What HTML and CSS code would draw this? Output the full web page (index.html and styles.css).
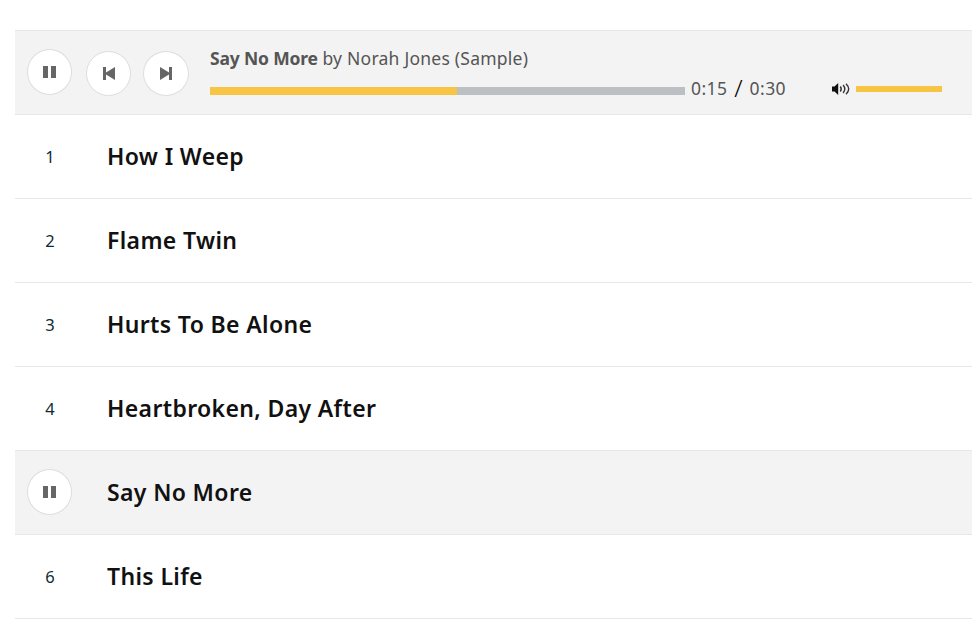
FILE: index.html
```
<!DOCTYPE html>
<html lang="en">
<head>
    <meta charset="UTF-8">
    <meta name="viewport" content="width=device-width, initial-scale=1.0">
    <title>Say No More by Norah Jones</title>
    <link rel="stylesheet" href="styles.css">
</head>
<body>
    <div class="container">
        <div class="player">
            <div class="controls">
                <button class="btn btn-pause" aria-label="Pause">
                    <svg width="13" height="12" viewBox="0 0 13 12"><path d="M0 0h5v12H0zM8 0h5v12H8z"/></svg>
                </button>
                <button class="btn btn-prev" aria-label="Previous">
                    <svg width="12" height="13" viewBox="0 0 12 13"><path d="M0 0h3v5.6L12 0v13L3 7.4V13H0z"/></svg>
                </button>
                <button class="btn btn-next" aria-label="Next">
                    <svg width="12" height="13" viewBox="0 0 12 13"><path d="M12 0H9v5.6L0 0v13l9-5.6V13h3z"/></svg>
                </button>
            </div>
            <div class="now-playing">
                <div class="sample-title"><b class="song">Say No More</b> <span class="artist">by Norah Jones (Sample)</span></div>
                <div class="progress-row">
                    <div class="progress"><div class="progress-fill"></div></div>
                    <div class="time"><span>0:15</span><span class="slash">/</span><span>0:30</span></div>
                    <svg class="speaker" width="18" height="12" viewBox="0 0 18 12">
                        <path d="M0 3.5h2.5L6.2 0v12L2.5 8.5H0z" fill="#111"/>
                        <path d="M8.3 3.5q1.9 2.5 0 5M11.1 2q3.4 4 0 8M14 .7q5.4 5.3 0 10.6" fill="none" stroke="#333" stroke-width="1.4"/>
                    </svg>
                    <div class="volume"></div>
                </div>
            </div>
        </div>
        <div class="track">
            <div class="number">1</div>
            <div class="title">How I Weep</div>
        </div>
        <div class="track">
            <div class="number">2</div>
            <div class="title">Flame Twin</div>
        </div>
        <div class="track">
            <div class="number">3</div>
            <div class="title">Hurts To Be Alone</div>
        </div>
        <div class="track">
            <div class="number">4</div>
            <div class="title">Heartbroken, Day After</div>
        </div>
        <div class="track active">
            <div class="number">
                <button class="btn btn-pause" aria-label="Pause">
                    <svg width="13" height="12" viewBox="0 0 13 12"><path d="M0 0h5v12H0zM8 0h5v12H8z"/></svg>
                </button>
            </div>
            <div class="title">Say No More</div>
        </div>
        <div class="track">
            <div class="number">6</div>
            <div class="title">This Life</div>
        </div>
    </div>
</body>
</html>
```
FILE: styles.css
```
body {
    margin: 0;
    background-color: #fff;
    font-family: "Noto Sans", "Open Sans", sans-serif;
    color: #111;
    overflow: hidden;
}
.container {
    padding: 30px 0 0 15px;
}
.player {
    display: flex;
    box-sizing: border-box;
    height: 85px;
    background-color: #f3f3f3;
    border-top: 1px solid #e7e7e7;
    border-bottom: 1px solid #e7e7e7;
}
.controls {
    display: flex;
    width: 195px;
    box-sizing: border-box;
    padding: 18px 0 0 12px;
}
.btn {
    display: flex;
    justify-content: center;
    align-items: center;
    box-sizing: border-box;
    width: 45px;
    height: 46px;
    padding: 0;
    border: 1px solid #ddd;
    border-radius: 50%;
    background-color: #fff;
}
.btn svg {
    display: block;
    fill: #666;
}
.btn-prev {
    height: 45px;
    margin: 2px 0 0 14px;
}
.btn-next {
    width: 46px;
    height: 45px;
    margin: 2px 0 0 12px;
}
.now-playing {
    flex: 1;
    padding-top: 15px;
    color: #555;
}
.sample-title {
    height: 24px;
    font-size: 17.5px;
    line-height: 24px;
    white-space: nowrap;
}
.song {
    letter-spacing: -0.17px;
}
.artist {
    letter-spacing: 0.24px;
}
.progress-row {
    display: flex;
    align-items: center;
    height: 24px;
    margin-top: 7px;
}
.progress {
    width: 475px;
    height: 8px;
    margin-top: 3px;
    background-color: #bbc0c4;
}
.progress-fill {
    width: 52.1%;
    height: 100%;
    background-color: #f8c444;
}
.time {
    display: flex;
    align-items: center;
    width: 141px;
    padding: 0 0 2px 6px;
    font-size: 17.5px;
    line-height: 24px;
    letter-spacing: 0.45px;
}
.slash {
    width: 22px;
    text-align: center;
    font-size: 24px;
    font-weight: 300;
    color: #000;
}
.speaker {
    margin-right: 6px;
}
.volume {
    width: 86px;
    height: 6px;
    background-color: #f8c444;
}
.track {
    display: flex;
    align-items: center;
    height: 83px;
    border-bottom: 1px solid #e7e7e7;
}
.active {
    background-color: #f3f3f3;
}
.number {
    display: flex;
    justify-content: center;
    width: 70px;
    font-size: 16.5px;
    color: #0f2b35;
}
.number .btn {
    margin: 0 1px 1px 0;
}
.title {
    padding: 0 0 2px 22px;
    font-size: 23px;
    font-weight: 600;
    line-height: 32px;
    letter-spacing: 0.36px;
    white-space: nowrap;
}
```
